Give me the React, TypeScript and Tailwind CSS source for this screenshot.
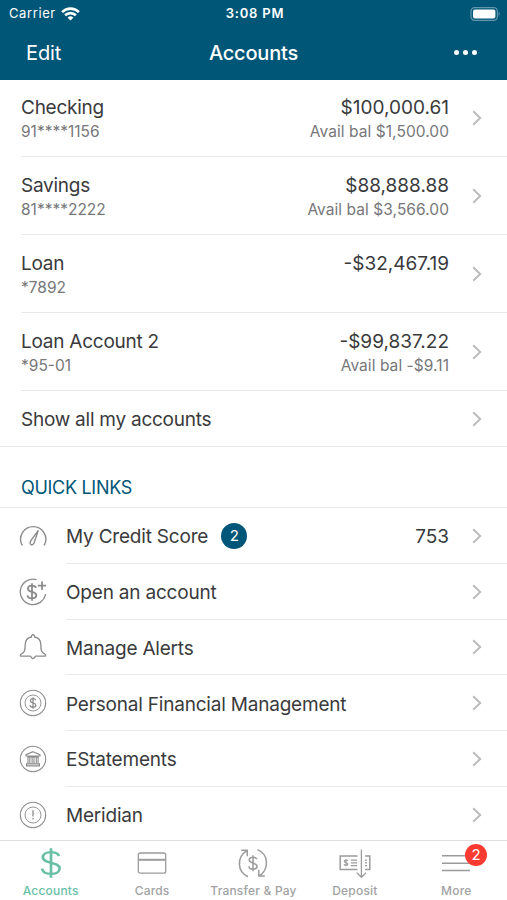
import React from 'react';

interface Account {
  name: string;
  number: string;
  balance: string;
  available?: string;
}

interface QuickLink {
  label: string;
  icon: React.ReactNode;
  badge?: string;
  value?: string;
}

const Chevron = () => (
  <svg className="w-[10px] h-4 shrink-0" viewBox="0 0 10 16" fill="none" stroke="#bcbcbe" strokeWidth="2">
    <path d="M1.2 1.3 8.2 8l-7 6.7" />
  </svg>
);

const WifiIcon = () => (
  <svg className="w-[19px] h-[14px]" viewBox="0 0 19 14" fill="none" stroke="white" strokeWidth="2.6">
    <path d="M1.1 5.1a12 12 0 0 1 16.8 0" />
    <path d="M4.1 8.3a7.7 7.7 0 0 1 10.8 0" />
    <path d="M9.5 13.6 6.6 10.7a4.1 4.1 0 0 1 5.8 0z" fill="white" stroke="none" />
  </svg>
);

const BatteryIcon = () => (
  <svg className="w-[31px] h-[14px]" viewBox="0 0 31 14" fill="none">
    <rect x="1" y=".7" width="26.4" height="12.6" rx="3.6" stroke="#6396ad" strokeWidth="1.2" />
    <rect x="3" y="2.6" width="22.4" height="8.8" rx="2" fill="white" />
    <path d="M28.6 5v4c1.5-.5 1.5-3.5 0-4z" fill="#6396ad" />
  </svg>
);

// S curve and bar shared by every icon with a dollar sign
const dollar = 'M4.5-4.6C3.8-6.3 2.1-7.1 0-7.1c-2.6 0-4.5 1.3-4.5 3.4C-4.5 1 4.8-1.1 4.8 3.6 4.8 5.8 2.8 7.1 0 7.1c-2.7 0-4.7-1.2-5-3.4M0-9.6V9.6';

const iconProps = {
  className: 'w-[28px] h-[28px] shrink-0',
  viewBox: '0 0 28 28',
  fill: 'none',
  stroke: '#8b8b8d',
  strokeWidth: 1.1,
};

const GaugeIcon = () => (
  <svg {...iconProps} strokeWidth="1.4">
    <path d="M3.7 22.8H2.9A12.6 12.6 0 1 1 25.5 22.8h-.8" />
    <path d="M19.3 8.3 12.4 17.8c-1.8 2.4-1.6 4.2-.3 4.8 1.4.6 2.8-.4 3.5-3.2z" />
  </svg>
);

const OpenAccountIcon = () => (
  <svg {...iconProps} strokeWidth="1.3">
    <path d="M17.5 1.7A12.7 12.7 0 1 0 26.5 16" />
    <path d={dollar} transform="translate(13 14) scale(.9)" strokeWidth="2" />
    <path d="M23 3.6v8.2M18.9 7.7h8.2" strokeWidth="1.8" />
  </svg>
);

const BellIcon = () => (
  <svg {...iconProps} strokeWidth="1.3">
    <path d="M12.4 4c-.4-3 3.6-3 3.2 0 4.400.8 6.200 4 6.200 7.600 0 6.200.7 7.700 4.200 9.700 1.100.7.6 1.900-.3 1.900h-8.900c-.8 0-1.600 2.500-2.800 2.500s-2-2.500-2.800-2.500H2.300c-.9 0-1.400-1.200-.3-1.900 3.500-2 4.200-3.500 4.200-9.700C6.200 8 8 4.800 12.400 4z" />
  </svg>
);

const MoneyIcon = () => (
  <svg {...iconProps}>
    <circle cx="14" cy="14" r="12.7" />
    <circle cx="14" cy="14" r="8" strokeWidth=".9" />
    <path d={dollar} transform="translate(14 14) scale(.6)" strokeWidth="2.1" />
  </svg>
);

const BankIcon = () => (
  <svg {...iconProps}>
    <circle cx="14" cy="14" r="12.7" />
    <path d="M14 6.700 21 9.700v1.300H7V9.700zM8.500 12h11M7.500 18.900h13v2h-13z" />
    <path d="M9 11.500v7M10.800 11.500v7M13.100 11.500v7M15 11.500v7M17.300 11.500v7M19.100 11.500v7" />
  </svg>
);

const AlertIcon = () => (
  <svg {...iconProps}>
    <circle cx="14" cy="14" r="12.7" />
    <circle cx="14" cy="14" r="8" strokeWidth=".9" />
    <path d="M14 9.300v6.200M14 17v1.500" strokeWidth="1.3" />
  </svg>
);

const AccountsTabIcon = () => (
  <svg className="w-[32px] h-[32px]" viewBox="-16 -16 32 32" fill="none" stroke="#68bfa5">
    <path d={dollar} transform="scale(1.8 1.53)" strokeWidth="1.5" />
  </svg>
);

const CardsTabIcon = () => (
  <svg className="w-[32px] h-[32px]" viewBox="0 0 32 32" fill="none" stroke="#9b9b9d" strokeWidth="1.3">
    <rect x="2.3" y="6" width="27.4" height="20.2" rx="2" />
    <path d="M2.3 12.8h27.4" strokeWidth="2" />
  </svg>
);

const TransferTabIcon = () => (
  <svg className="w-[32px] h-[32px]" viewBox="0 0 32 32" fill="none" stroke="#9b9b9d" strokeWidth="1.5">
    <path d="M11 29.700C.3 25 -.8 10.500 9.800 3.700M4.300 3.200h6v6" />
    <path d="M20.500 2.600c11 4.500 12.200 19.300 1.600 26.500M21.800 23v6h6" />
    <path d={dollar} transform="translate(16 16.2) scale(.84)" strokeWidth="1.8" />
  </svg>
);

const DepositTabIcon = () => (
  <svg className="w-[32px] h-[32px]" viewBox="0 0 32 32" fill="none" stroke="#9b9b9d" strokeWidth="1.3">
    <path d="M18.500 9H1.200v13.400h17.300M26 9h4.800v13.400H26" strokeWidth="1.5" />
    <path d="M22.400 2.500v27.500M17.800 25.800l4.600 4.500 4.600-4.500" />
    <path d={dollar} transform="translate(7 15.7) scale(.38)" strokeWidth="3" />
    <path d="M11.800 13.200h6.200M11.800 15.900h6.200M11.800 18.700h6.200M26 13.200h2M26 15.900h2M26 18.700h2" />
  </svg>
);

const MoreTabIcon = () => (
  <svg className="w-[32px] h-[32px]" viewBox="0 0 32 32" fill="none" stroke="#9b9b9d" strokeWidth="1.5">
    <path d="M2 8.700h28M2 16.200h28M2 23.500h28" />
  </svg>
);

const accounts: Account[] = [
  { name: 'Checking', number: '91****1156', balance: '$100,000.61', available: 'Avail bal $1,500.00' },
  { name: 'Savings', number: '81****2222', balance: '$88,888.88', available: 'Avail bal $3,566.00' },
  { name: 'Loan', number: '*7892', balance: '-$32,467.19' },
  { name: 'Loan Account 2', number: '*95-01', balance: '-$99,837.22', available: 'Avail bal -$9.11' },
];

const quickLinks: QuickLink[] = [
  { label: 'My Credit Score', icon: <GaugeIcon />, badge: '2', value: '753' },
  { label: 'Open an account', icon: <OpenAccountIcon /> },
  { label: 'Manage Alerts', icon: <BellIcon /> },
  { label: 'Personal Financial Management', icon: <MoneyIcon /> },
  { label: 'EStatements', icon: <BankIcon /> },
  { label: 'Meridian', icon: <AlertIcon /> },
];

const tabs = [
  { label: 'Accounts', icon: <AccountsTabIcon />, active: true },
  { label: 'Cards', icon: <CardsTabIcon /> },
  { label: 'Transfer & Pay', icon: <TransferTabIcon /> },
  { label: 'Deposit', icon: <DepositTabIcon /> },
  { label: 'More', icon: <MoreTabIcon />, badge: '2' },
];

const AccountRow: React.FC<{ account: Account }> = ({ account }) => (
  <button className="flex items-center h-[78px] ml-[21px] pr-[25px] border-b border-[#e9e9ea] text-left">
    <div className="flex-1 pt-1">
      <p className="text-[19px] leading-6 tracking-[-0.25px]">{account.name}</p>
      <p className="text-[15.5px] leading-6 text-[#77777a]">{account.number}</p>
    </div>
    <div className="text-right pt-1 mr-[23px]">
      <p className="text-[19px] leading-6">{account.balance}</p>
      <p className="text-[15.5px] leading-6 tracking-[0.06px] text-[#77777a] min-h-6">{account.available}</p>
    </div>
    <Chevron />
  </button>
);

const LinkRow: React.FC<{ link: QuickLink }> = ({ link }) => (
  <button className="group flex items-center h-[55.8px] pl-[19px] text-left">
    {link.icon}
    <div className="flex items-center flex-1 h-full ml-[19px] pt-px pr-[25px] border-b border-[#e9e9ea] group-last:border-transparent">
      <span className="pt-[3px] text-[19px] tracking-[-0.2px]">{link.label}</span>
      {link.badge && (
        <span className="flex items-center justify-center w-[26px] h-[26px] ml-[13px] rounded-full bg-[#005677] text-white text-[15px]">
          {link.badge}
        </span>
      )}
      <span className="ml-auto pt-[3px] mr-[23px] text-[19px]">{link.value}</span>
      <Chevron />
    </div>
  </button>
);

const App: React.FC = () => {
  return (
    <div className="flex flex-col w-[507px] h-[900px] overflow-hidden bg-white text-[#3a3a3c] font-['Inter','Liberation_Sans',sans-serif]">
      <header className="h-20 shrink-0 bg-[#005677] text-white">
        <div className="grid grid-cols-3 items-center h-[27px] pl-[9px] pr-[6px] text-[13px]">
          <div className="flex items-center gap-[5px] tracking-[0.6px]">
            <span className="pt-px">Carrier</span>
            <WifiIcon />
          </div>
          <span className="pt-px text-center font-semibold tracking-[0.8px]">3:08 PM</span>
          <div className="flex justify-end">
            <BatteryIcon />
          </div>
        </div>
        <div className="grid grid-cols-3 items-center h-[51px] pl-[26px] pr-[30px] text-[20px]">
          <button className="text-left tracking-[-0.1px]">Edit</button>
          <h1 className="pl-1 text-center font-medium tracking-[-0.2px]">Accounts</h1>
          <button className="flex justify-end gap-1">
            <i className="w-[5px] h-[5px] rounded-full bg-white" />
            <i className="w-[5px] h-[5px] rounded-full bg-white" />
            <i className="w-[5px] h-[5px] rounded-full bg-white" />
          </button>
        </div>
      </header>

      <main className="flex flex-col flex-1 min-h-0 overflow-hidden">
        <section className="flex flex-col shrink-0 -mt-px">
          {accounts.map(account => (
            <AccountRow key={account.name} account={account} />
          ))}
          <button className="flex items-center justify-between h-14 pl-[21px] pr-[25px] border-b border-[#e9e9ea] text-[19px] tracking-[-0.25px]">
            <span className="pt-[3px]">Show all my accounts</span>
            <Chevron />
          </button>
        </section>

        <h2 className="flex items-end shrink-0 h-[61px] pl-[21px] pb-[6px] border-b border-[#e9e9ea] text-[18px] tracking-[-0.3px] text-[#005677]">
          QUICK LINKS
        </h2>
        <section className="flex flex-col shrink-0">
          {quickLinks.map(link => (
            <LinkRow key={link.label} link={link} />
          ))}
        </section>
      </main>

      <nav className="grid grid-cols-5 shrink-0 h-[60px] border-t border-[#dedee0] bg-white text-[12px] text-[#a2a2a4]">
        {tabs.map(tab => (
          <button
            key={tab.label}
            className={`flex flex-col items-center pt-[6px] font-medium tracking-[0.2px] ${tab.active ? 'text-[#68bfa5]' : ''}`}
          >
            <span className="relative">
              {tab.icon}
              {tab.badge && (
                <span className="absolute -top-[3px] left-[25px] flex items-center justify-center w-[22px] h-[22px] rounded-full bg-[#fb3b31] text-white text-[15px] font-normal">
                  {tab.badge}
                </span>
              )}
            </span>
            <span className="leading-4 mt-[4px] whitespace-nowrap">{tab.label}</span>
          </button>
        ))}
      </nav>
    </div>
  );
};

export default App;
